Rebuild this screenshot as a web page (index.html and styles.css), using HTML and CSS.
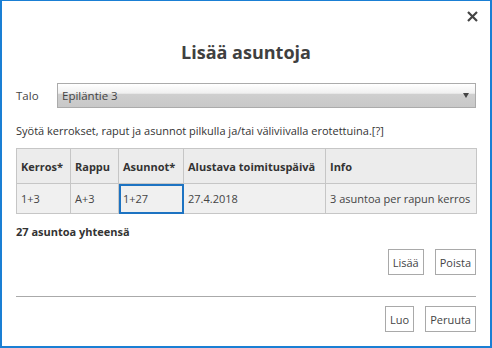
FILE: index.html
```html
<!DOCTYPE html>
<html lang="fi">
<head>
<meta charset="utf-8">
<link rel="stylesheet" href="styles.css">
</head>
<body>
<div class="window">
  <div class="topbar">
    <button class="close" aria-label="Sulje">
      <svg width="11" height="11" viewBox="0 0 11 11"><path d="M1 1L10 10M10 1L1 10" stroke="#444" stroke-width="2.2" fill="none"/></svg>
    </button>
  </div>
  <h1 class="title">Lisää asuntoja</h1>
  <div class="field">
    <span class="label">Talo</span>
    <div class="select"><span>Epiläntie 3</span><span class="arrow"></span></div>
  </div>
  <p class="hint">Syötä kerrokset, raput ja asunnot pilkulla ja/tai väliviivalla erotettuina.[?]</p>
  <table class="grid">
    <colgroup><col class="c1"><col class="c2"><col class="c3"><col class="c4"><col class="c5"></colgroup>
    <thead>
      <tr><th>Kerros*</th><th>Rappu</th><th>Asunnot*</th><th>Alustava toimituspäivä</th><th>Info</th></tr>
    </thead>
    <tbody>
      <tr><td>1+3</td><td>A+3</td><td class="focus">1+27</td><td>27.4.2018</td><td>3 asuntoa per rapun kerros</td></tr>
    </tbody>
  </table>
  <p class="total">27 asuntoa yhteensä</p>
  <div class="actions row1">
    <button class="btn">Lisää</button>
    <button class="btn">Poista</button>
  </div>
  <hr class="sep">
  <div class="actions row2">
    <button class="btn">Luo</button>
    <button class="btn">Peruuta</button>
  </div>
</div>
</body>
</html>
```
FILE: styles.css
```css
* { box-sizing: border-box; }
html, body { margin: 0; padding: 0; background: #fff; }
body { font-family: "Open Sans", "Noto Sans", sans-serif; color: #333; font-size: 11px; }
.window {
  width: 492px; height: 348px;
  border: 2px solid #1a7fd4; border-top-width: 1px;
  padding: 0 14px;
  display: flex; flex-direction: column;
}
.topbar { display: flex; justify-content: flex-end; height: 30px; padding-top: 10px; }
.close { border: 0; background: none; padding: 0; margin-right: -2px; width: 11px; height: 11px; display: block; }
.close svg { display: block; }
.title { margin: 8px 0 0; font-size: 18px; text-align: center; font-weight: 700; color: #404040; line-height: 26px; height: 44px; }
.field { display: flex; align-items: center; height: 25px; }
.label { width: 41px; color: #444; font-size: 11.5px; }
.select {
  flex: 1; height: 25px; border: 1px solid #ababab;
  background: linear-gradient(#ffffff 0%, #f0f0f0 40%, #cfcfcf 45%, #c8c8c8 100%);
  display: flex; align-items: center; justify-content: space-between; padding: 0 6px 0 4px;
  color: #444; font-size: 11.5px;
}
.arrow { width: 0; height: 0; border-left: 3.5px solid transparent; border-right: 3.5px solid transparent; border-top: 5px solid #444; }
.hint { margin: 15px 0 0; color: #333; line-height: 16px; }
.grid { margin-top: 9px; border-collapse: collapse; width: 460px; table-layout: fixed; border: 1px solid #a9a9a9; }
.grid th, .grid td { border: 1px solid #c6c6c6; text-align: left; padding: 0 4px; white-space: nowrap; overflow: hidden; }
.grid th { height: 35px; background: #ececec; font-weight: 700; color: #333; }
.grid td { height: 30px; background: #f0f0f0; color: #444; }
.grid td.focus { outline: 2px solid #1d73c2; outline-offset: -2px; }
.c1 { width: 54px; } .c2 { width: 48px; } .c3 { width: 65px; } .c4 { width: 142px; } .c5 { width: 151px; }
.total { margin: 10px 0 0; font-weight: 700; color: #333; }
.actions { display: flex; justify-content: flex-end; gap: 11px; }
.row1 { margin-top: 10px; }
.btn {
  font: inherit; color: #444; background: #fff; border: 1px solid #a9a9a9;
  height: 26px; padding: 0 4px;
}
.sep { margin: 21px 0 0; border: 0; border-top: 1px solid #aaa; height: 0; }
.row2 { margin-top: 9px; }
```
